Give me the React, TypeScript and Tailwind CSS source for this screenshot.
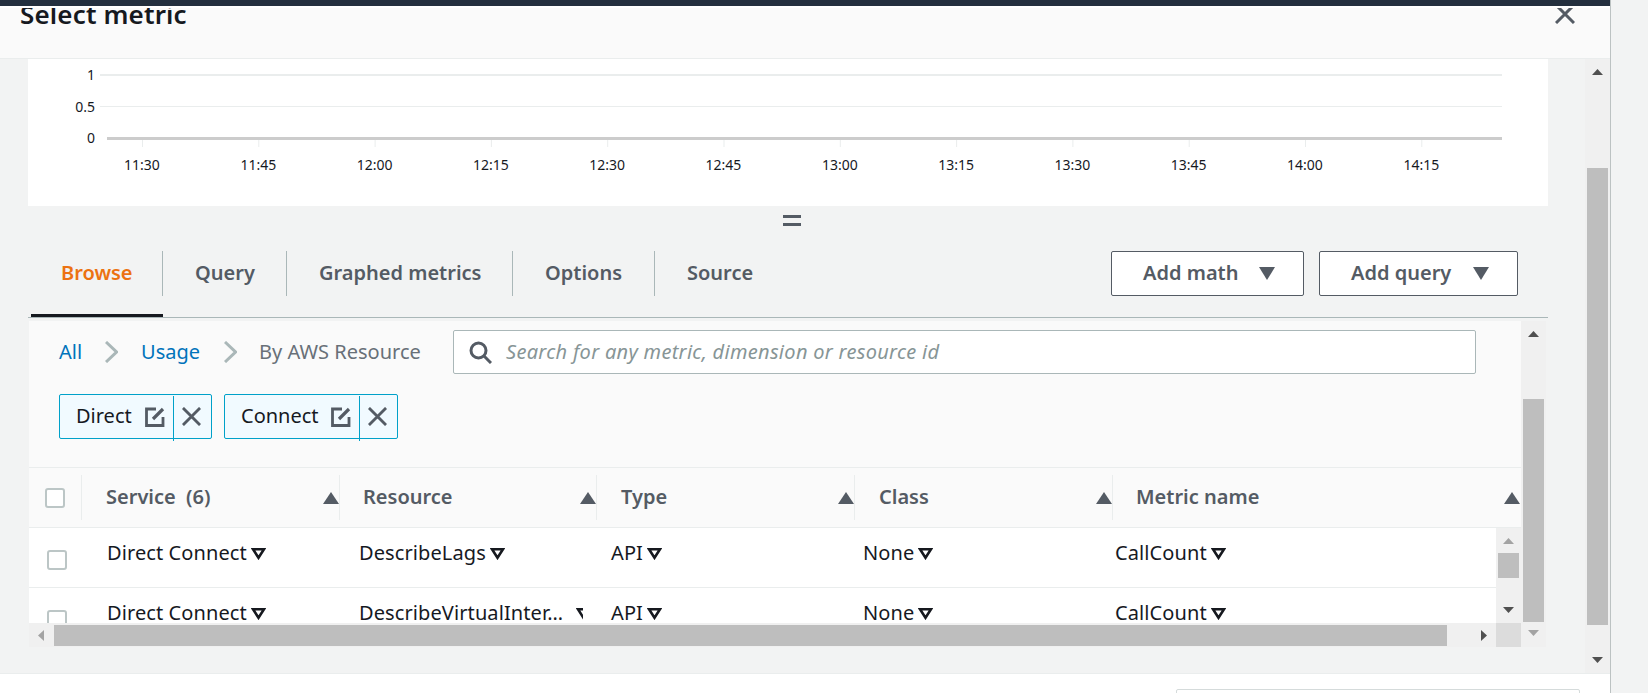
import React from 'react';

const font = { fontFamily: '"Noto Sans", sans-serif' };

const ticks = ['11:30', '11:45', '12:00', '12:15', '12:30', '12:45', '13:00', '13:15', '13:30', '13:45', '14:00', '14:15'];

const rows = [
  { service: 'Direct Connect', resource: 'DescribeLags' },
  { service: 'Direct Connect', resource: 'DescribeVirtualInter…' },
];

const Tri: React.FC<{ dir: 'up' | 'down' | 'left' | 'right'; w: number; h: number; color: string }> = ({ dir, w, h, color }) => {
  const points = {
    up: '5,0 10,10 0,10',
    down: '0,0 10,0 5,10',
    left: '10,0 10,10 0,5',
    right: '0,0 10,5 0,10',
  }[dir];
  return (
    <svg width={w} height={h} viewBox="0 0 10 10" preserveAspectRatio="none" className="block shrink-0">
      <polygon points={points} fill={color} />
    </svg>
  );
};

const FilterCaret: React.FC = () => (
  <svg width="15" height="12" viewBox="0 0 15 12" className="block shrink-0">
    <polygon points="2,1.3 13,1.3 7.5,9.8" fill="none" stroke="#16191f" strokeWidth="2.6" />
  </svg>
);

const EditIcon: React.FC = () => (
  <svg width="20" height="20" viewBox="0 0 20 20" className="block shrink-0" fill="none" stroke="#545b64" strokeWidth="2.8">
    <path d="M11 2H1.500v16.500h16.500V10" />
    <path d="M8 12L18 2" strokeWidth="3.2" />
  </svg>
);

const CloseIcon: React.FC<{ size?: number }> = ({ size = 20 }) => (
  <svg width={size} height={size} viewBox="0 0 20 20" className="block shrink-0" fill="none" stroke="#545b64" strokeWidth="3">
    <path d="M1 1l18 18M19 1L1 19" />
  </svg>
);

const Chevron: React.FC = () => (
  <svg width="13" height="22" viewBox="0 0 13 22" className="block shrink-0" fill="none" stroke="#aab7b8" strokeWidth="3">
    <path d="M1 1l10.500 10L1 21" />
  </svg>
);

const Chart: React.FC = () => (
  <svg width="1520" height="147" viewBox="28 59 1520 147" className="block">
    <rect x="100" y="74" width="1402" height="2" fill="#eaeded" />
    <rect x="100" y="106" width="1402" height="1" fill="#eaeded" />
    <rect x="107" y="137" width="1395" height="3" fill="#cccccc" />
    <text x="95" y="80" textAnchor="end" fontSize="14" fill="#16191f" style={font}>1</text>
    <text x="95" y="112" textAnchor="end" fontSize="14" fill="#16191f" style={font}>0.5</text>
    <text x="95" y="143" textAnchor="end" fontSize="14" fill="#16191f" style={font}>0</text>
    {ticks.map((t, i) => (
      <g key={t}>
        <rect x={142 + i * 116.3} y="140" width="1" height="7" fill="#eaeded" />
        <text x={142 + i * 116.3} y="170" textAnchor="middle" fontSize="14" fill="#16191f" style={font}>{t}</text>
      </g>
    ))}
  </svg>
);

const Tab: React.FC<{ label: string; active?: boolean; className: string; last?: boolean }> = ({ label, active, className, last }) => (
  <div className={`pb-[18px] border-b-[3px] ${active ? 'border-[#16191f]' : 'border-transparent'}`}>
    <div className={`h-[45px] flex items-center text-[20px] font-semibold pb-[2px] ${className} ${last ? '' : 'border-r border-[#aab7b8]'} ${active ? 'text-[#ec7211]' : 'text-[#545b64]'}`}>
      {label}
    </div>
  </div>
);

const MenuButton: React.FC<{ label: string; className: string }> = ({ label, className }) => (
  <button className={`h-[45px] bg-white border border-[#545b64] rounded-[2px] flex items-center text-[20px] font-semibold text-[#545b64] ${className}`}>
    <span className="pb-[2px]">{label}</span>
    <span className="ml-auto"><Tri dir="down" w={16} h={13} color="#545b64" /></span>
  </button>
);

const Token: React.FC<{ label: string; className: string }> = ({ label, className }) => (
  <div className={`h-[45px] relative flex items-center bg-[#f1faff] border border-[#00a1c9] rounded-[2px] pl-[16px] ${className}`}>
    <span className="text-[20px] text-[#16191f] pb-[2px]">{label}</span>
    <span className="ml-auto flex items-center">
      <EditIcon />
      <span className="w-px h-[45px] bg-[#00a1c9] mx-[8px] translate-y-[2px]" />
      <span className="mr-[10px]"><CloseIcon size={19} /></span>
    </span>
  </div>
);

const Checkbox: React.FC = () => (
  <div className="w-[20px] h-[20px] bg-white border-2 border-[#bcc6c6] rounded-[3px] shrink-0" />
);

const HeaderCell: React.FC<{ label: string; className: string; last?: boolean }> = ({ label, className, last }) => (
  <div className={`h-[45px] flex items-center text-[20px] font-semibold text-[#545b64] ${className} ${last ? '' : 'border-r border-[#eaeded]'}`}>
    <span className="pb-[2px]">{label}</span>
    <span className="ml-auto"><Tri dir="up" w={16} h={12} color="#545b64" /></span>
  </div>
);

const Cell: React.FC<{ text: string; clip?: boolean }> = ({ text, clip }) => (
  <div className="w-[252px] shrink-0 flex items-center text-[20px] tracking-[0.1px] text-[#16191f]">
    <span className="-ml-px pb-[2px]">{text}</span>
    {clip ? (
      <span className="ml-[13px] w-[7px] overflow-hidden"><FilterCaret /></span>
    ) : (
      <span className="ml-[4px]"><FilterCaret /></span>
    )}
  </div>
);

const App: React.FC = () => {
  return (
    <div className="w-[1648px] h-[693px] overflow-hidden flex bg-[#f2f3f3]" style={font}>
      <div className="w-[1611px] shrink-0 flex flex-col border-r border-[#bcc2c2] bg-[#f2f3f3]">
        <div className="h-[6px] bg-[#232f3e] shrink-0" />
        <div className="h-[2px] bg-white shrink-0" />
        <div className="h-[51px] shrink-0 bg-[#fafafa] border-b border-[#eaeded] flex justify-between pl-[20px] pr-[35px] overflow-hidden">
          <h2 className="text-[26px] tracking-[0.15px] leading-[32px] font-semibold text-[#16191f] -mt-[10px]">Select metric</h2>
          <div className="-mt-[4px]"><CloseIcon size={20} /></div>
        </div>

        <div className="flex-1 flex min-h-0">
          <div className="w-[1585px] shrink-0 pl-[28px] pr-[37px]">
            <div className="bg-white h-[147px]"><Chart /></div>

            <div className="h-[45px] pt-[9px] pl-[755px]">
              <div className="w-[18px] h-[3px] bg-[#545b64]" />
              <div className="w-[18px] h-[3px] bg-[#545b64] mt-[5px]" />
            </div>

            <div className="flex items-start border-b border-[#aab7b8] pl-[3px] pr-[30px] h-[67px]">
              <Tab label="Browse" active className="w-[132px] pl-[30px]" />
              <Tab label="Query" className="w-[124px] pl-[32px]" />
              <Tab label="Graphed metrics" className="w-[226px] pl-[32px]" />
              <Tab label="Options" className="w-[142px] pl-[32px]" />
              <Tab label="Source" className="w-[120px] pl-[32px]" last />
              <div className="ml-auto flex gap-[15px]">
                <MenuButton label="Add math" className="w-[193px] pl-[31px] pr-[28px]" />
                <MenuButton label="Add query" className="w-[199px] pl-[31px] pr-[28px]" />
              </div>
            </div>

            <div className="mt-[3px] ml-px w-[1517px] h-[326px] flex">
              <div className="w-[1492px] shrink-0 flex flex-col">
                <div className="h-[147px] shrink-0 bg-[#fafafa] border-b border-[#eaeded] pl-[30px] pt-[9px]">
                  <div className="flex items-center h-[44px] text-[20px]">
                    <span className="text-[#0073bb]">All</span>
                    <span className="ml-[23px]"><Chevron /></span>
                    <span className="ml-[23px] text-[#0073bb]">Usage</span>
                    <span className="ml-[24px]"><Chevron /></span>
                    <span className="ml-[22px] text-[#687078]">By AWS Resource</span>
                    <div className="ml-auto mr-[45px] w-[1023px] h-[44px] bg-white border border-[#aab7b8] rounded-[2px] flex items-center pl-[15px]">
                      <svg width="23" height="23" viewBox="0 0 23 23" className="block shrink-0" fill="none" stroke="#545b64" strokeWidth="3">
                        <circle cx="9.5" cy="9.5" r="7.5" />
                        <path d="M15 15l7 7" />
                      </svg>
                      <span className="ml-[14px] italic text-[#879596] tracking-[0.3px]">Search for any metric, dimension or resource id</span>
                    </div>
                  </div>
                  <div className="flex gap-[12px] mt-[20px]">
                    <Token label="Direct" className="w-[153px]" />
                    <Token label="Connect" className="w-[174px]" />
                  </div>
                </div>

                <div className="h-[60px] shrink-0 bg-[#fafafa] border-b border-[#eaeded] flex items-center">
                  <div className="w-[53px] h-[45px] shrink-0 pl-[16px] flex items-center border-r border-[#eaeded]"><Checkbox /></div>
                  <HeaderCell label="Service  (6)" className="w-[258px] pl-[24px] whitespace-pre" />
                  <HeaderCell label="Resource" className="w-[257px] pl-[23px]" />
                  <HeaderCell label="Type" className="w-[258px] pl-[24px]" />
                  <HeaderCell label="Class" className="w-[258px] pl-[24px]" />
                  <HeaderCell label="Metric name" className="w-[408px] pl-[23px] pr-px" last />
                </div>

                <div className="h-[95px] shrink-0 flex">
                  <div className="w-[1467px] shrink-0 bg-white overflow-hidden">
                    {rows.map((r) => (
                      <div key={r.resource} className="h-[60px] flex items-center border-b border-[#eaeded] pb-[8px]">
                        <div className="w-[79px] shrink-0 pl-[18px] pt-[13px]"><Checkbox /></div>
                        <Cell text={r.service} />
                        <Cell text={r.resource} clip={r.resource.endsWith('…')} />
                        <Cell text="API" />
                        <Cell text="None" />
                        <Cell text="CallCount" />
                      </div>
                    ))}
                  </div>
                  <div className="w-[25px] shrink-0 bg-[#f0f0f0] flex flex-col items-center pt-[10px]">
                    <Tri dir="up" w={11} h={6} color="#a3a3a3" />
                    <div className="w-[21px] h-[25px] bg-[#bebebe] mt-[9px]" />
                    <div className="mt-[29px]"><Tri dir="down" w={11} h={6} color="#505050" /></div>
                  </div>
                </div>

                <div className="h-[24px] shrink-0 flex">
                  <div className="w-[1467px] shrink-0 bg-[#f0f0f0] flex items-start pt-[2px] pl-[9px]">
                    <span className="mt-[5px]"><Tri dir="left" w={6} h={11} color="#a3a3a3" /></span>
                    <div className="ml-[10px] w-[1393px] h-[21px] bg-[#bebebe]" />
                    <span className="ml-[34px] mt-[5px]"><Tri dir="right" w={6} h={11} color="#505050" /></span>
                  </div>
                  <div className="w-[25px] shrink-0 bg-[#dcdcdc]" />
                </div>
              </div>

              <div className="w-[25px] shrink-0 bg-[#f0f0f0] flex flex-col items-center pt-[10px]">
                <Tri dir="up" w={11} h={6} color="#505050" />
                <div className="w-[21px] h-[223px] bg-[#bebebe] mt-[62px]" />
                <div className="mt-[8px]"><Tri dir="down" w={11} h={6} color="#a3a3a3" /></div>
              </div>
            </div>
          </div>

          <div className="w-[25px] shrink-0 bg-[#f0f0f0] flex flex-col items-center pt-[10px]">
            <Tri dir="up" w={11} h={6} color="#505050" />
            <div className="w-[21px] h-[457px] bg-[#bebebe] mt-[93px]" />
            <div className="mt-[32px]"><Tri dir="down" w={11} h={6} color="#505050" /></div>
          </div>
        </div>

        <div className="h-[20px] shrink-0 bg-white border-t border-[#eaeded] pt-[15px] pl-[1176px]">
          <div className="w-[404px] h-[20px] bg-white border border-[#d5dbdb] rounded-[2px]" />
        </div>
      </div>
      <div className="flex-1 bg-[#f2f3f3]" />
    </div>
  );
};

export default App;
